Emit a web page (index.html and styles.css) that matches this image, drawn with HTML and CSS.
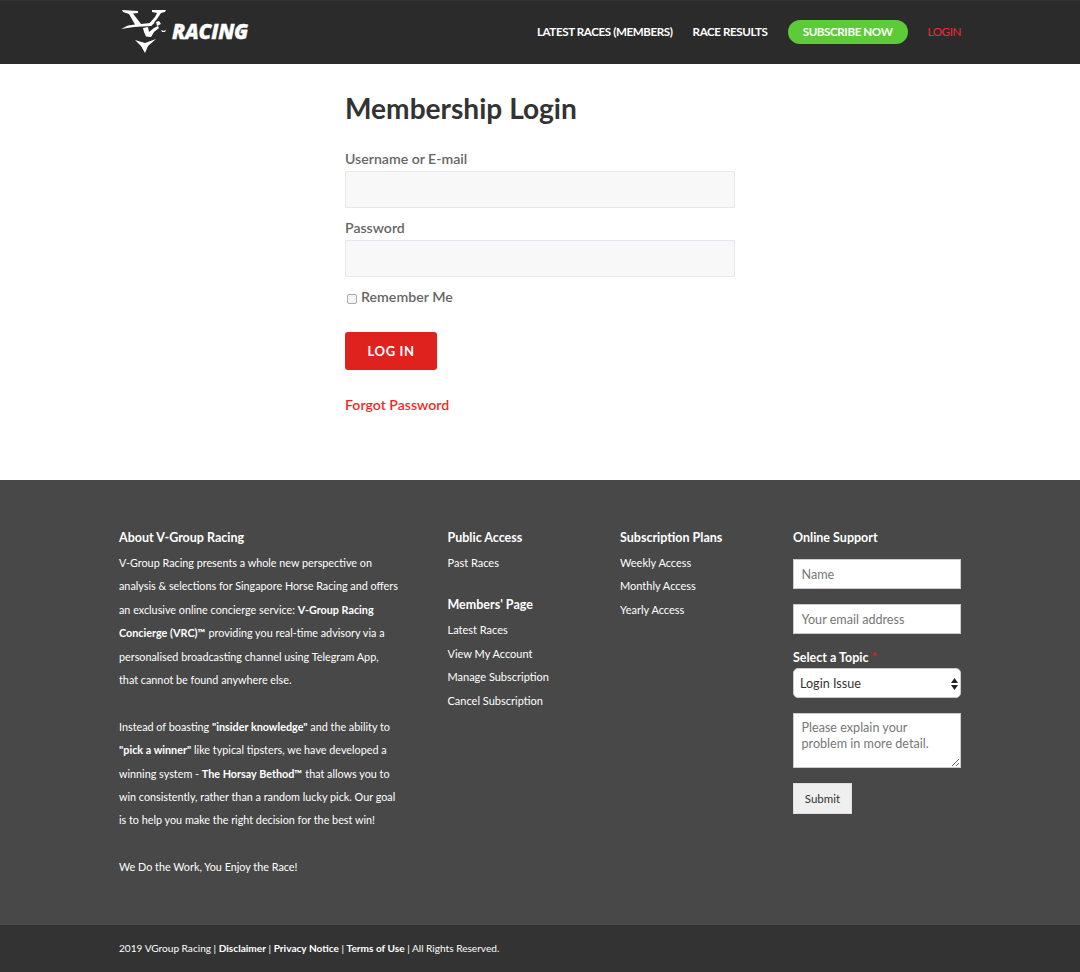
FILE: index.html
```html
<!DOCTYPE html>
<html lang="en">
<head>
<meta charset="utf-8">
<title>Membership Login</title>
<link rel="stylesheet" href="styles.css">
</head>
<body>
<header class="topbar">
  <div class="topbar-inner">
    <a class="logo" href="#">
      <svg class="logo-mark" width="50" height="46" viewBox="0 0 50 46" aria-hidden="true">
        <path fill="#fff" d="M2 2 L18 3 L18 5 L13 5.5 L21 16 L35 14.5 L31 18 L14 19 L1 21 L8 17.5 L15 16.5 L9 6 L3 4 Z"/>
        <path fill="#fff" d="M32 2 L46 2 L45 4 L41 5 L37 11 L31 18 L28 17 L35 9 L37 5 L32 4 Z"/>
        <path fill="#fff" d="M36 14 L39 13 L41 16 L37 18 Z"/>
        <path fill="#fff" d="M23 20 L28 19 L29 24 L34 20 L38 18 L39 20 L34 24 L31 29 L26 28.5 L24 24 Z"/>
        <path fill="#fff" d="M41 22 L44 23 L46 21.5 L45 24 L42 24 Z"/>
        <path fill="#fff" d="M15 32 L25 35 L36 31 L28 38 L25 45 L21 38 Z"/>
      </svg>
      <span class="logo-text">RACING</span>
    </a>
    <nav class="nav">
      <a href="#">LATEST RACES (MEMBERS)</a>
      <a href="#">RACE RESULTS</a>
      <a class="nav-cta" href="#">SUBSCRIBE NOW</a>
      <a class="nav-login" href="#">LOGIN</a>
    </nav>
  </div>
</header>

<main class="login">
  <h1>Membership Login</h1>
  <form class="login-form">
    <label class="field-label" for="user">Username or E-mail</label>
    <input class="field" id="user" type="text">
    <label class="field-label" for="pass">Password</label>
    <input class="field" id="pass" type="password">
    <label class="remember"><input type="checkbox"><span>Remember Me</span></label>
    <button class="login-btn" type="button">LOG IN</button>
    <a class="forgot" href="#">Forgot Password</a>
  </form>
</main>

<footer class="footer">
  <div class="footer-grid">
    <section class="col-about">
      <h4>About V-Group Racing</h4>
      <p>V-Group Racing presents a whole new perspective on<br>analysis &amp; selections for Singapore Horse Racing and offers<br>an exclusive online concierge service: <b>V-Group Racing</b><br><b>Concierge (VRC)™</b> providing you real-time advisory via a<br>personalised broadcasting channel using Telegram App,<br>that cannot be found anywhere else.</p>
      <p>Instead of boasting <b>"insider knowledge"</b> and the ability to<br><b>"pick a winner"</b> like typical tipsters, we have developed a<br>winning system - <b>The Horsay Bethod™</b> that allows you to<br>win consistently, rather than a random lucky pick. Our goal<br>is to help you make the right decision for the best win!</p>
      <p>We Do the Work, You Enjoy the Race!</p>
    </section>
    <section class="col-links">
      <h4>Public Access</h4>
      <ul><li><a href="#">Past Races</a></li></ul>
      <h4 class="sub-head">Members' Page</h4>
      <ul>
        <li><a href="#">Latest Races</a></li>
        <li><a href="#">View My Account</a></li>
        <li><a href="#">Manage Subscription</a></li>
        <li><a href="#">Cancel Subscription</a></li>
      </ul>
    </section>
    <section class="col-links">
      <h4>Subscription Plans</h4>
      <ul>
        <li><a href="#">Weekly Access</a></li>
        <li><a href="#">Monthly Access</a></li>
        <li><a href="#">Yearly Access</a></li>
      </ul>
    </section>
    <section class="col-support">
      <h4>Online Support</h4>
      <form class="support-form">
        <input class="support-input" type="text" placeholder="Name">
        <input class="support-input" type="email" placeholder="Your email address">
        <div class="topic">
          <label class="topic-label" for="topic">Select a Topic <span class="req">*</span></label>
          <div class="select-wrap">
            <select class="support-select" id="topic"><option>Login Issue</option></select>
            <svg class="select-arrows" width="7" height="12" viewBox="0 0 7 12" aria-hidden="true">
              <path fill="#222" d="M3.5 0 L7 5 L0 5 Z M0 7 L7 7 L3.5 12 Z"/>
            </svg>
          </div>
        </div>
        <textarea class="support-text" placeholder="Please explain your problem in more detail."></textarea>
        <button class="submit" type="button">Submit</button>
      </form>
    </section>
  </div>
</footer>

<div class="legal">
  <p>2019 VGroup Racing | <b>Disclaimer</b> | <b>Privacy Notice</b> | <b>Terms of Use</b> | All Rights Reserved.</p>
</div>
</body>
</html>
```
FILE: styles.css
```css
* { box-sizing: border-box; }
html, body { margin: 0; padding: 0; }
body { font-family: Lato, "Liberation Sans", sans-serif; background: #fff; color: #666; }
a { text-decoration: none; color: inherit; }

.topbar { height: 64px; background: #2b2b2b; border-top: 1px solid #333; }
.topbar-inner { width: 842px; margin-left: 119px; height: 62px; display: flex; align-items: center; justify-content: space-between; }
.logo { display: flex; align-items: center; margin-left: 1px; }
.logo-mark { display: block; margin-top: -2px; }
.logo-text { font-family: "Open Sans", "Liberation Sans", sans-serif; font-weight: 800; font-style: italic; font-size: 20.5px; color: #fff; margin-left: 2px; margin-top: -2px; letter-spacing: -0.3px; -webkit-text-stroke: 0.3px #fff; }
.nav { display: flex; align-items: center; gap: 20px; font-size: 11.6px; line-height: 24px; font-weight: 700; color: #fff; letter-spacing: -0.4px; }
.nav-cta { background: #5ccb38; border-radius: 13px; height: 24px; width: 120px; text-align: center; }
.nav-login { color: #f22a2f; font-weight: 400; }

.login { width: 390px; margin: 0 auto; height: 416px; padding-top: 26px; }
.login h1 { margin: 0; font-size: 28.1px; line-height: 36px; font-weight: 700; color: #333; }
.login-form { display: flex; flex-direction: column; align-items: flex-start; margin-top: 23px; }
.field-label { font-size: 14.1px; font-weight: 600; line-height: 20px; color: #666; margin-bottom: 2px; }
.field { width: 390px; height: 37px; background: #f8f8f9; border: 1px solid #e6e6ec; margin-bottom: 10px; }
.remember { display: flex; align-items: center; font-size: 14.2px; font-weight: 600; color: #666; line-height: 20px; }
.remember input { appearance: none; margin: 3px 4px 0 2px; width: 10px; height: 10px; border: 1px solid #aaa; border-radius: 2px; background: #f6f6f6; }
.login-btn { margin-top: 25px; width: 92px; height: 38px; border: 0; border-radius: 3px; background: #e0221f; color: #fff; font-family: inherit; font-size: 13px; font-weight: 700; letter-spacing: 0.6px; }
.forgot { margin-top: 25px; font-size: 14.1px; font-weight: 600; line-height: 20px; color: #fb1f25; }

.footer { height: 445px; background: #484848; color: #fff; padding-top: 49px; }
.footer-grid { width: 842px; margin-left: 119px; display: grid; grid-template-columns: 328.5px 172.5px 173px 168px; }
.footer h4 { margin: 0; font-size: 12.5px; line-height: 18px; font-weight: 700; color: #fff; }
.col-about p { margin: 0 0 23.4px; font-size: 10.8px; line-height: 23.4px; white-space: nowrap; }
.col-about h4 { margin-bottom: 4px; }
.col-links ul { list-style: none; margin: 4px 0 0; padding: 0; font-size: 11px; line-height: 23.4px; }
.sub-head { margin-top: 22px !important; }
.support-form { display: flex; flex-direction: column; margin-top: 12px; }
.support-input, .support-text, .support-select { width: 168px; border: 1px solid #ccc; background: #fff; font-family: inherit; font-size: 12.6px; color: #333; }
.support-input { height: 30px; padding: 0 7.5px; margin-bottom: 15px; }
::placeholder { color: #777; opacity: 1; }
.topic { display: flex; flex-direction: column; margin-bottom: 15px; }
.topic-label { font-size: 12.5px; font-weight: 700; line-height: 18px; margin: 0 0 1px; }
.req { color: #d22; }
.select-wrap { position: relative; height: 30px; }
.support-select { appearance: none; height: 30px; border-radius: 5px; padding: 0 6px; display: block; }
.select-arrows { position: absolute; top: 10px; right: 3px; pointer-events: none; }
.support-text { height: 55px; padding: 6px 7.5px; line-height: 15.5px; margin-bottom: 15px; display: block; resize: vertical; }
.submit { width: 59px; height: 31px; background: #efefef; border: 1px solid #ddd; font-family: inherit; font-size: 11.5px; color: #333; }

.legal { height: 47px; background: #333; color: #fff; font-size: 10.1px; display: flex; align-items: center; padding-left: 119px; padding-bottom: 2px; }
.legal p { margin: 0; }
```
